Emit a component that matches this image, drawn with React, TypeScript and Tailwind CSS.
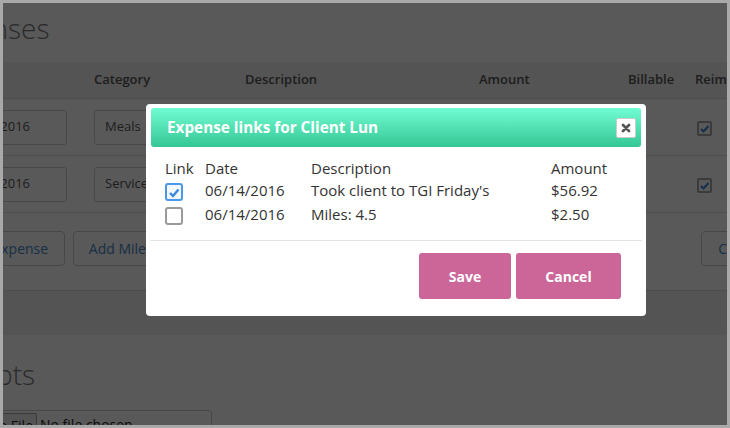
import React from "react";

function PageCheck() {
  return (
    <div className="w-[15px] h-[15px] border-2 border-[#a8a8a8] rounded-[2px] bg-white flex items-center justify-center">
      <svg width="11" height="11" viewBox="0 0 11 11">
        <polyline points="2,6 4.5,8.5 9.5,3" fill="none" stroke="#3a86d4" strokeWidth="2" />
      </svg>
    </div>
  );
}

function ModalCheck({ checked }: { checked: boolean }) {
  return checked ? (
    <div className="w-[18px] h-[18px] border-2 border-[#4a98e6] rounded-[3px] bg-[#f3f8fe] flex items-center justify-center">
      <svg width="14" height="14" viewBox="0 0 14 14">
        <polyline points="3,8 6,11 11.5,4.5" fill="none" stroke="#3b88da" strokeWidth="2.4" />
      </svg>
    </div>
  ) : (
    <div className="w-[18px] h-[18px] border-2 border-[#9a9a9a] rounded-[3px] bg-white" />
  );
}

function PageRow({ category }: { category: string }) {
  return (
    <div className="grid grid-cols-[174px_151px_234px_149px_67px_1fr] h-[57px] items-center border-b border-[#dddddd]">
      <div className="pl-[30px]">
        <div className="w-[117px] h-[35px] border border-[#cccccc] rounded-[3px] pl-[10px] flex items-center text-[13px] text-[#555]">
          06/14/2016
        </div>
      </div>
      <div>
        <div className="w-[140px] h-[35px] border border-[#cccccc] rounded-[3px] pl-[10px] flex items-center text-[13px] text-[#555]">
          {category}
        </div>
      </div>
      <div>
        <div className="w-[220px] h-[35px] border border-[#cccccc] rounded-[3px]" />
      </div>
      <div>
        <div className="w-[130px] h-[35px] border border-[#cccccc] rounded-[3px]" />
      </div>
      <div className="pl-[1px]">
        <PageCheck />
      </div>
      <div className="pl-[2px] pt-[2px]">
        <PageCheck />
      </div>
    </div>
  );
}

export default function App() {
  return (
    <div className="w-[730px] h-[428px] border-[3px] border-[#a9a9a9] relative overflow-hidden bg-white font-['Open_Sans',sans-serif]">
      {/* underlying page */}
      <div className="ml-[-83px] w-[900px]">
        <h1 className="h-[59px] pl-[10px] pt-[9px] text-[28px] leading-[33px] font-light text-[#7a7a7a]">
          Expenses
        </h1>
        <div className="grid grid-cols-[174px_151px_234px_149px_67px_1fr] h-[37px] items-center bg-[#f0f0f0] border-b border-[#dddddd] text-[13px] font-semibold text-[#555]">
          <div className="pl-[30px]">Date</div>
          <div>Category</div>
          <div>Description</div>
          <div>Amount</div>
          <div>Billable</div>
          <div>Reimbursable</div>
        </div>
        <PageRow category="Meals" />
        <PageRow category="Services" />
        <div className="flex pl-[27px] pt-[18px] pb-[24px] border-b border-[#dddddd]">
          <button className="shrink-0 w-[118px] h-[35px] border border-[#cccccc] rounded-[4px] text-[14px] text-[#3f86c8] bg-white">
            Add Expense
          </button>
          <button className="shrink-0 ml-[8px] w-[112px] h-[35px] border border-[#cccccc] rounded-[4px] text-[14px] text-[#3f86c8] bg-white">
            Add Mileage
          </button>
          <button className="shrink-0 ml-[516px] w-[70px] h-[35px] border border-[#cccccc] rounded-[4px] text-[14px] text-[#3f86c8] bg-white">
            Close
          </button>
        </div>
        <div className="h-[44px] bg-[#f0f0f0]" />
        <h2 className="mt-[23px] pl-[9px] text-[28px] leading-[33px] font-light text-[#7a7a7a]">
          Receipts
        </h2>
        <div className="mt-[19px] ml-[30px] w-[262px] h-[34px] border border-[#cccccc] rounded-[3px] pl-[4px] pt-[2px] flex items-start gap-[3px]">
          <span className="shrink-0 w-[82px] h-[24px] border border-[#aaaaaa] rounded-[2px] bg-[#eeeeee] text-[14px] text-[#222] flex items-center justify-end pr-[3px]">
            Choose File
          </span>
          <span className="text-[14px] text-[#222] leading-[24px]">No file chosen</span>
        </div>
      </div>

      {/* overlay */}
      <div className="absolute inset-0 bg-black/65" />

      {/* modal */}
      <div className="absolute left-[143px] top-[101px] w-[500px] h-[212px] bg-white rounded-[4px] flex flex-col">
        <div className="mt-[4px] mx-[5px] h-[39px] rounded-[3px] bg-linear-to-b from-[#70fdd4] to-[#33c694] flex items-center justify-between pl-[16px] pr-[5px]">
          <span className="text-white font-bold text-[15.3px]">Expense links for Client Lun</span>
          <div className="w-[20px] h-[20px] bg-white border border-[#cccccc] rounded-[2px] flex items-center justify-center">
            <svg width="10" height="10" viewBox="0 0 10 10">
              <path d="M2 2 L8 8 M8 2 L2 8" stroke="#555" strokeWidth="2.8" strokeLinecap="round" />
            </svg>
          </div>
        </div>
        <div className="pl-[19px] pt-[11px] text-[15px] text-[#333]">
          <div className="grid grid-cols-[40px_106px_240px_1fr] h-[20px] leading-[20px]">
            <div>Link</div>
            <div>Date</div>
            <div>Description</div>
            <div>Amount</div>
          </div>
          <div className="grid grid-cols-[40px_106px_240px_1fr] h-[24px] leading-[24px]">
            <div className="pt-[5px]">
              <ModalCheck checked={true} />
            </div>
            <div>06/14/2016</div>
            <div>Took client to TGI Friday's</div>
            <div>$56.92</div>
          </div>
          <div className="grid grid-cols-[40px_106px_240px_1fr] h-[24px] leading-[24px]">
            <div className="pt-[5px]">
              <ModalCheck checked={false} />
            </div>
            <div>06/14/2016</div>
            <div>Miles: 4.5</div>
            <div>$2.50</div>
          </div>
        </div>
        <div className="mt-[14px] mx-[4px] border-t border-[#e2e2e2]" />
        <div className="flex justify-end gap-[5px] pt-[12px] pr-[25px]">
          <button className="w-[92px] h-[46px] bg-[#cc6699] rounded-[3px] text-white font-bold text-[14px]">
            Save
          </button>
          <button className="w-[105px] h-[46px] bg-[#cc6699] rounded-[3px] text-white font-bold text-[14px]">
            Cancel
          </button>
        </div>
      </div>
    </div>
  );
}
